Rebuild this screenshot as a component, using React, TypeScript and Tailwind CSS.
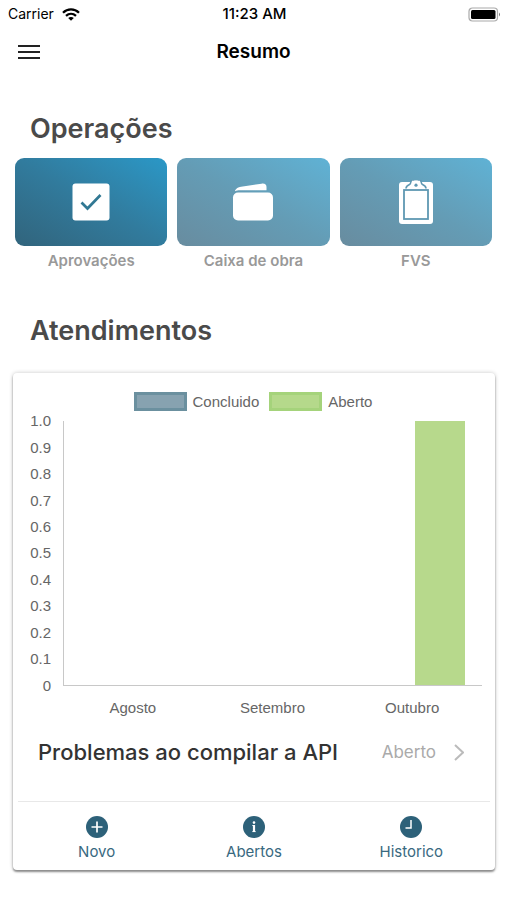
import type { ReactNode } from "react";

const operations: { label: string; gradient: string; icon: ReactNode }[] = [
  {
    label: "Aprovações",
    gradient: "from-[#31647c] via-[#317b9d] to-[#2a98c7]",
    icon: (
      <svg viewBox="0 0 38 38" className="h-[38px] w-[38px]" aria-hidden="true">
        <rect x="0.5" y="0.5" width="37" height="37" rx="3" fill="#fff" />
        <path d="M9.5 19.500l6 6L28.500 12" fill="none" stroke="#317893" strokeWidth="2.700" />
      </svg>
    ),
  },
  {
    label: "Caixa de obra",
    gradient: "from-[#688c9f] via-[#649cb5] to-[#5fb2d5]",
    icon: (
      <svg viewBox="0 0 42 38" className="h-[38px] w-[42px]" aria-hidden="true">
        <rect x="1" y="9.500" width="40" height="28" rx="5" fill="#fff" />
        <path d="M3 7.700C4 5.500 6 4.200 9 3.700L29.500 0.700C33 0.200 34.500 1.700 34.500 4V7.300H8C6 7.300 4.500 7.500 3 8.300Z" fill="#fff" />
      </svg>
    ),
  },
  {
    label: "FVS",
    gradient: "from-[#688c9f] via-[#649cb5] to-[#5fb2d5]",
    icon: (
      <svg viewBox="0 0 36 44" className="h-11 w-9" aria-hidden="true">
        <rect x="1" y="2" width="34" height="42" rx="3" fill="#fff" />
        <rect x="6" y="10" width="24" height="29" fill="#fff" stroke="#5f98b2" strokeWidth="1.800" />
        <path
          d="M8 8.500C8 6 10 5.200 11.500 4.600C13 4 12.500 2.500 13.500 0H22.500C23.500 2.500 23 4 24.500 4.600C26 5.200 28 6 28 8.500"
          fill="#fff"
          stroke="#5f98b2"
          strokeWidth="1.600"
        />
        <path d="M13.800 2C15.500 0 20.500 0 22.200 2V4H13.800Z" fill="#fff" />
        <circle cx="18" cy="5.200" r="1.600" fill="#5f98b2" />
      </svg>
    ),
  },
];

const ticks = ["1.0", "0.9", "0.8", "0.7", "0.6", "0.5", "0.4", "0.3", "0.2", "0.1", "0"];

const months = [
  { name: "Agosto", done: 0, open: 0 },
  { name: "Setembro", done: 0, open: 0 },
  { name: "Outubro", done: 0, open: 1 },
];

const actions: { label: string; glyph: ReactNode }[] = [
  { label: "Novo", glyph: <path d="M11 5.500V16.500M5.500 11H16.500" stroke="#fff" strokeWidth="1.700" /> },
  {
    label: "Abertos",
    glyph: (
      <>
        <circle cx="11" cy="6.600" r="1.300" fill="#fff" />
        <path d="M11 9V16" stroke="#fff" strokeWidth="2.200" />
        <path d="M9.200 9.500H11M9.200 15.600H12.800" stroke="#fff" strokeWidth="0.800" />
      </>
    ),
  },
  { label: "Historico", glyph: <path d="M11 4V12H5.500" fill="none" stroke="#fff" strokeWidth="1.500" /> },
];

function StatusBar() {
  return (
    <div className="grid h-7 grid-cols-3 items-center pr-[6px] pl-2 text-sm text-black">
      <div className="flex items-center gap-2">
        <span>Carrier</span>
        <svg viewBox="0 0 18 13" className="h-[13px] w-[18px]" aria-hidden="true">
          <g fill="none" stroke="#000" strokeWidth="2.300">
            <path d="M1 4.700C5.500 0.300 12.500 0.300 17 4.700" />
            <path d="M4 7.900C7 5.200 11 5.200 14 7.900" />
          </g>
          <path d="M6.200 10C7.800 8.600 10.200 8.600 11.800 10L9 12.800Z" />
        </svg>
      </div>
      <span className="text-center text-[15px] font-medium whitespace-nowrap">11:23 AM</span>
      <svg viewBox="0 0 33 15" className="h-[15px] w-[33px] justify-self-end" aria-hidden="true">
        <rect x="1" y="1" width="28.500" height="13" rx="3.500" fill="#fff" stroke="#aaa" strokeWidth="1.200" />
        <rect x="3" y="3" width="24.500" height="9" rx="1.500" />
        <path d="M31 5.500Q33 7.500 31 9.500Z" fill="#777" />
      </svg>
    </div>
  );
}

function Legend({ label, swatch }: { label: string; swatch: string }) {
  return (
    <li className="flex items-center gap-[6px]">
      <span className={`h-[19px] w-[53px] border-[3px] ${swatch}`} />
      {label}
    </li>
  );
}

function Chart() {
  return (
    <div className="pr-[13px] pl-4 font-['Liberation_Sans',Arial,sans-serif] text-[15px] leading-5 text-[#666]">
      <ul className="flex h-[19px] items-center justify-center gap-[10px] pr-[5px]">
        <Legend label="Concluido" swatch="border-[#6b909f] bg-[#87a2b0]" />
        <Legend label="Aberto" swatch="border-[#a5d37b] bg-[#b5d98b]" />
      </ul>
      <div className="-mt-[3px] flex h-[291px]">
        <div className="flex w-[22px] shrink-0 flex-col text-right">
          {ticks.map((tick) => (
            <span key={tick} className="flex flex-1 items-center justify-end">
              {tick}
            </span>
          ))}
        </div>
        <div className="my-[13px] ml-3 grid flex-1 grid-cols-3 border-b border-l border-[#c8c8c8]">
          {months.map((month) => (
            <div key={month.name} className="grid grid-cols-2 items-end px-[10%]">
              <div className="mx-auto w-[90%] bg-[#87a2b0]" style={{ height: `${month.done * 100}%` }} />
              <div className="mx-auto w-[90%] bg-[#b7d98c]" style={{ height: `${month.open * 100}%` }} />
            </div>
          ))}
        </div>
      </div>
      <div className="-mt-px ml-[34px] grid grid-cols-3 text-center">
        {months.map((month) => (
          <span key={month.name}>{month.name}</span>
        ))}
      </div>
    </div>
  );
}

export default function App() {
  return (
    <div className="min-h-screen bg-white pb-7 font-['Inter',sans-serif]">
      <StatusBar />
      <header className="grid h-12 grid-cols-3 items-center px-[18px]">
        <button type="button" aria-label="Menu" className="justify-self-start">
          <svg viewBox="0 0 22 16" className="h-4 w-[22px]" aria-hidden="true">
            <path d="M0 2H22M0 8H22M0 14H22" stroke="#222" strokeWidth="2" />
          </svg>
        </button>
        <h1 className="text-center text-[19px] font-semibold text-black">Resumo</h1>
      </header>

      <main>
        <section className="px-[15px] pt-[35px]">
          <h2 className="px-[15px] text-[27px] leading-9 font-semibold text-[#4a4a4a]">Operações</h2>
          <div className="mt-[11px] grid grid-cols-3 gap-[10px]">
            {operations.map((op) => (
              <button key={op.label} type="button" className="flex flex-col text-center">
                <span className={`flex h-[88px] w-full items-center justify-center rounded-[9px] bg-linear-to-tr ${op.gradient}`}>
                  {op.icon}
                </span>
                <span className="mt-[5px] w-full text-[15px] leading-5 font-semibold text-[#999]">{op.label}</span>
              </button>
            ))}
          </div>
        </section>

        <section className="pt-[42px]">
          <h2 className="px-[30px] text-[27px] leading-9 font-semibold text-[#4a4a4a]">Atendimentos</h2>
          <div className="mr-3 ml-[13px] mt-6 rounded-[4px] bg-white pt-[19px] shadow-[0_2px_2px_rgba(0,0,0,0.4),0_0px_4px_rgba(0,0,0,0.22)]">
            <Chart />
            <a href="#problema" className="mt-4 flex h-[67px] items-start justify-between pr-[31px] pl-[25px]">
              <span className="text-[22px] leading-9 font-medium text-[#333]">Problemas ao compilar a API</span>
              <span className="flex items-center gap-[18px] text-[17px] leading-9 text-[#aaa]">
                Aberto
                <svg viewBox="0 0 10 17" className="h-[17px] w-[10px]" aria-hidden="true">
                  <path d="M1 1L9 8.500L1 16" fill="none" stroke="#bbb" strokeWidth="2" />
                </svg>
              </span>
            </a>
            <nav className="mx-[5px] grid grid-cols-3 border-t border-[#e8e8e8] pt-[14px] pb-2">
              {actions.map((action) => (
                <button key={action.label} type="button" className="flex flex-col items-center gap-1 text-[#39697f]">
                  <svg viewBox="0 0 22 22" className="h-[22px] w-[22px]" aria-hidden="true">
                    <circle cx="11" cy="11" r="11" fill="#2d6179" />
                    {action.glyph}
                  </svg>
                  <span className="text-[15px] leading-5">{action.label}</span>
                </button>
              ))}
            </nav>
          </div>
        </section>
      </main>
    </div>
  );
}
